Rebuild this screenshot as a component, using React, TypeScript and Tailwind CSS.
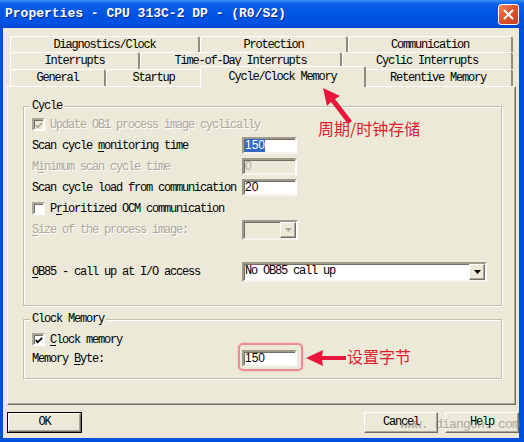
import React from "react";

const mono = "font-['Liberation_Mono',monospace] text-[12px] tracking-[-1.2px] leading-[13px]";
const cjk = "font-['Noto_Sans_CJK_SC',sans-serif]";

function U({ c }: { c: string }) {
  return <span className="underline underline-offset-[2px]">{c}</span>;
}

function Tab({ label, className }: { label: string; className: string }) {
  return (
    <div
      className={`flex h-full items-center justify-center rounded-t-[3px] border-l border-t border-r-2 border-l-white border-t-white border-r-[#8f8c7e] pt-[1px] text-black ${mono} ${className}`}
    >
      {label}
    </div>
  );
}

function Check({ checked, disabled }: { checked?: boolean; disabled?: boolean }) {
  return (
    <div
      className={`flex h-[13px] w-[13px] shrink-0 items-center justify-center border-2 border-t-[#aca899] border-l-[#aca899] border-r-white border-b-white shadow-[inset_1px_1px_0_#716f64] ${disabled ? "bg-[#ECE9D8]" : "bg-white"}`}
    >
      {checked && (
        <svg width="9" height="9" viewBox="0 0 9 9" className="ml-[1px] mt-[1px]">
          <path d="M1 4 L3 6.5 L8 1.5" fill="none" stroke={disabled ? "#aca899" : "#000"} strokeWidth="2" />
        </svg>
      )}
    </div>
  );
}

function DropBtn({ disabled }: { disabled?: boolean }) {
  return (
    <div className="flex h-[16px] w-[16px] shrink-0 items-center justify-center border border-t-white border-l-white border-r-[#716f64] border-b-[#716f64] bg-[#ECE9D8] shadow-[inset_-1px_-1px_0_#aca899]">
      <svg width="7" height="4" viewBox="0 0 7 4">
        <path d="M0 0 H7 L3.5 4 Z" fill={disabled ? "#aca899" : "#000"} />
      </svg>
    </div>
  );
}

const sunken = "border-2 border-t-[#9d9a8c] border-l-[#9d9a8c] border-r-white border-b-[#f4f3ee] shadow-[inset_1px_1px_0_#716f64]";
const raised = "border border-t-white border-l-white border-r-[#716f64] border-b-[#716f64] shadow-[inset_-1px_-1px_0_#aca899]";
const disabledText = "text-[#aca899] [text-shadow:1px_1px_0_#fff]";
const row = "flex h-[21px] items-center pt-[2px]";

export default function App() {
  return (
    <div className="relative flex h-[442px] w-[524px] flex-col overflow-hidden bg-[#0050DE]">
      {/* title bar */}
      <div className="flex h-[28px] shrink-0 items-center justify-between bg-[linear-gradient(180deg,#3d8ef9_0%,#0a5eea_14%,#0055e5_50%,#0052e0_85%,#0044cc_100%)] pl-[5px] pr-[5px]">
        <span className="font-['Liberation_Mono',monospace] text-[13px] font-bold leading-[16px] text-white [text-shadow:1px_1px_0_#0b2a8a]">
          Properties - CPU 313C-2 DP - (R0/S2)
        </span>
        <div className="flex h-[21px] w-[21px] items-center justify-center rounded-[3px] border border-white bg-[linear-gradient(135deg,#f08a64_0%,#e0532c_45%,#c8401c_100%)]">
          <svg width="11" height="11" viewBox="0 0 11 11">
            <path d="M1.5 1.5 L9.5 9.5 M9.5 1.5 L1.5 9.5" stroke="#fff" strokeWidth="2" strokeLinecap="round" />
          </svg>
        </div>
      </div>

      {/* window body */}
      <div className="ml-[3px] mr-[5px] flex h-[410px] flex-col bg-[#ECE9D8] pl-[4px] pt-[8px]">
        {/* tab rows */}
        <div className="ml-[3px] flex h-[16px] w-[503px]">
          <Tab label="Diagnostics/Clock" className="w-[190px]" />
          <Tab label="Protection" className="w-[148px]" />
          <Tab label="Communication" className="w-[165px]" />
        </div>
        <div className="ml-[3px] flex h-[17px] w-[503px]">
          <Tab label="Interrupts" className="w-[130px]" />
          <Tab label="Time-of-Day Interrupts" className="w-[202px]" />
          <Tab label="Cyclic Interrupts" className="w-[171px]" />
        </div>
        <div className="ml-[3px] flex h-[17px] w-[503px] items-end">
          <Tab label="General" className="w-[96px]" />
          <Tab label="Startup" className="w-[96px]" />
          <div
            className={`relative z-10 -mx-[2px] -mb-[1px] flex h-[21px] w-[166px] shrink-0 justify-center rounded-t-[3px] border-l border-t border-r-2 border-l-white border-t-white border-r-[#8f8c7e] bg-[#ECE9D8] pt-[4px] ${mono}`}
          >
            Cycle/Clock Memory
          </div>
          <Tab label="Retentive Memory" className="w-[149px]" />
        </div>

        {/* tab panel */}
        <div className="h-[319px] w-[509px] border border-l-white border-t-white border-r-[#716f64] border-b-[#716f64] shadow-[inset_-1px_-1px_0_#aca899]">
          {/* Cycle group */}
          <div className="relative ml-[15px] mt-[19px] flex h-[200px] w-[479px] flex-col border border-[#c2bfae] pl-[8px] pt-[7px] shadow-[1px_1px_0_#fff,inset_1px_1px_0_#fff]">
            <span className={`absolute -top-[7px] left-[6px] bg-[#ECE9D8] px-[2px] ${mono}`}>Cycle</span>

            <div className="flex h-[21px] items-center gap-[5px]">
              <Check checked disabled />
              <span className={`pt-[1px] ${mono} ${disabledText}`}>Update OB1 process image cyclically</span>
            </div>

            <div className="flex h-[21px] items-center">
              <span className={`w-[210px] pt-[2px] ${mono}`}>
                Scan cycle <U c="m" />onitoring time
              </span>
              <div className={`flex h-[17px] w-[55px] items-center bg-white pl-[1px] ${sunken}`}>
                <span className="bg-[#316AC5] font-['Liberation_Sans',sans-serif] text-[12px] leading-[13px] text-white">150</span>
              </div>
            </div>

            <div className="flex h-[21px] items-center">
              <span className={`w-[210px] pt-[2px] ${mono} ${disabledText}`}>
                M<U c="i" />nimum scan cycle time
              </span>
              <div className={`flex h-[17px] w-[55px] items-center bg-[#ECE9D8] pl-[1px] ${sunken}`}>
                <span className="font-['Liberation_Sans',sans-serif] text-[12px] leading-[13px] text-[#aca899]">0</span>
              </div>
            </div>

            <div className="flex h-[21px] items-center">
              <span className={`w-[210px] pt-[2px] ${mono}`}>Scan cycle load from communication</span>
              <div className={`flex h-[17px] w-[55px] items-center bg-white pl-[1px] ${sunken}`}>
                <span className="font-['Liberation_Sans',sans-serif] text-[12px] leading-[13px] text-black">20</span>
              </div>
            </div>

            <div className="flex h-[21px] items-center gap-[5px]">
              <Check />
              <span className={`pt-[1px] ${mono}`}>
                P<U c="r" />ioritized OCM communication
              </span>
            </div>

            <div className="flex h-[21px] items-center">
              <span className={`w-[210px] pt-[2px] ${mono} ${disabledText}`}>
                <U c="S" />ize of the process image:
              </span>
              <div className={`flex h-[20px] w-[56px] items-center justify-end bg-[#ECE9D8] ${sunken}`}>
                <DropBtn disabled />
              </div>
            </div>

            <div className="mt-[21px] flex h-[21px] items-center">
              <span className={`w-[210px] pt-[2px] ${mono}`}>
                <U c="O" />B85 - call up at I/O access
              </span>
              <div className={`flex h-[20px] w-[245px] items-center justify-between bg-white pl-[1px] ${sunken}`}>
                <span className={mono}>No OB85 call up</span>
                <DropBtn />
              </div>
            </div>
          </div>

          {/* Clock Memory group */}
          <div className="relative ml-[15px] mt-[13px] flex h-[60px] w-[479px] flex-col border border-[#c2bfae] pl-[8px] pt-[10px] shadow-[1px_1px_0_#fff,inset_1px_1px_0_#fff]">
            <span className={`absolute -top-[7px] left-[6px] bg-[#ECE9D8] px-[2px] ${mono}`}>Clock Memory</span>
            <div className="flex h-[19px] items-center gap-[5px]">
              <Check checked />
              <span className={`pt-[1px] ${mono}`}>
                <U c="C" />lock memory
              </span>
            </div>
            <div className="flex h-[19px] items-center">
              <span className={`w-[210px] pt-[2px] ${mono}`}>
                Memory <U c="B" />yte:
              </span>
              <div className={`flex h-[17px] w-[55px] items-center bg-white pl-[1px] ${sunken}`}>
                <span className="font-['Liberation_Sans',sans-serif] text-[12px] leading-[13px] text-black">150</span>
              </div>
            </div>
          </div>
        </div>

        {/* buttons */}
        <div className="mt-[7px] flex w-[512px] items-center">
          <div className="flex h-[21px] w-[75px] items-center justify-center border border-black bg-[#ECE9D8]">
            <div className={`flex h-full w-full items-center justify-center ${raised} ${mono}`}>OK</div>
          </div>
          <div className={`ml-auto flex h-[21px] w-[74px] items-center justify-center bg-[#ECE9D8] ${raised} ${mono}`}>Cancel</div>
          <div className={`ml-[7px] flex h-[21px] w-[74px] items-center justify-center bg-[#ECE9D8] ${raised} ${mono}`}>Help</div>
        </div>
      </div>

      {/* annotations */}
      <div className="absolute left-[225px] top-[82px] h-[2px] w-[117px] bg-[#ea7c96] shadow-[0_1px_2px_#f3b5c3]" />
      <svg className="absolute left-[315px] top-[82px]" width="45" height="48" viewBox="315 82 45 48">
        <path d="M323 88 L340 96 L335 99 L352 121 L348 124 L331 102 L327 106 Z" fill="#e8163a" />
      </svg>
      <span className={`absolute left-[318px] top-[117px] text-[16px] leading-[22px] text-[#e01e2e] ${cjk}`}>周期/时钟存储</span>

      <div className="absolute left-[238px] top-[343px] h-[28px] w-[65px] rounded-[5px] border-2 border-[#ee8a98] shadow-[0_0_3px_#f4b9c2]" />
      <svg className="absolute left-[304px] top-[348px]" width="44" height="20" viewBox="304 348 44 20">
        <path d="M306 358 L323 350 L322 356 L346 356 L346 360 L322 360 L323 366 Z" fill="#e8163a" />
      </svg>
      <span className={`absolute left-[347px] top-[345px] text-[16px] leading-[22px] text-[#e01e2e] ${cjk}`}>设置字节</span>

      <span className="absolute left-[400px] top-[418px] whitespace-nowrap font-['Liberation_Mono',monospace] text-[13px] leading-[14px] tracking-[-0.8px] text-[#7a7a7a]/60">
        www. diangon. com
      </span>
    </div>
  );
}
